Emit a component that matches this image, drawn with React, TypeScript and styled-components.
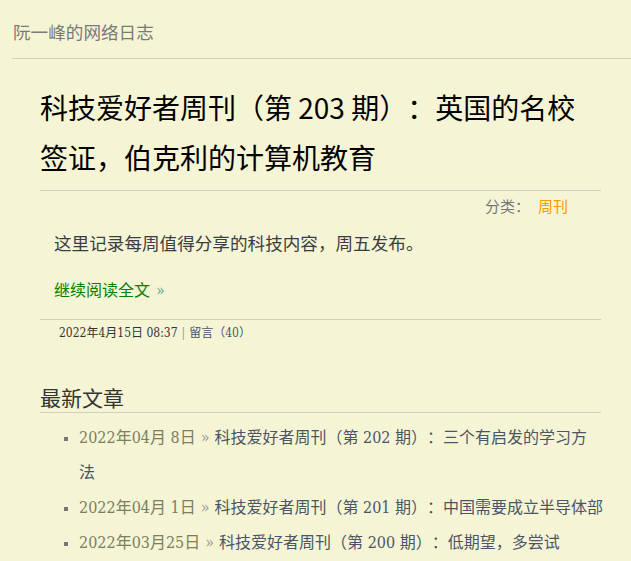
import React from "react";
import styled, { createGlobalStyle } from "styled-components";

const GlobalStyle = createGlobalStyle`
  html, body {
    margin: 0;
    padding: 0;
    background: #f5f5d5;
  }
  body {
    font-family: "DejaVu Serif Condensed", "Liberation Serif", "Noto Sans CJK SC", serif;
    color: #333;
    text-spacing-trim: space-all;
  }
  a { text-decoration: none; }
`;

const Page = styled.div`
  width: 631px;
  min-height: 561px;
  background: #f5f5d5;
`;

const Header = styled.header`
  margin-left: 12px;
  padding: 20px 0 12px 1px;
  border-bottom: 1px solid #cfcfc4;
`;

const SiteName = styled.a`
  display: block;
  font-size: 17.6px;
  line-height: 26px;
  color: #7a7a7a;
  font-family: "Liberation Serif", "Noto Sans CJK SC", serif;
`;

const Article = styled.article`
  margin: 0 30px 0 40px;
`;

const Title = styled.h1`
  margin: 23px 0 0;
  padding-bottom: 8px;
  font-family: "Noto Sans CJK SC", sans-serif;
  font-weight: 400;
  font-size: 28px;
  line-height: 50px;
  color: #000;
  border-bottom: 1px solid #cfcfc4;
`;

const Category = styled.div`
  margin-top: 5px;
  padding-right: 33px;
  text-align: right;
  font-family: "Noto Sans CJK SC", sans-serif;
  font-size: 15px;
  line-height: 20px;
  color: #777;
`;

const CategoryLink = styled.a`
  margin-left: 8px;
  color: #f90;
`;

const Summary = styled.p`
  margin: 14px 0 0;
  padding-left: 14px;
  font-size: 17.6px;
  line-height: 28px;
  color: #3a3d44;
`;

const ReadMore = styled.a`
  display: block;
  margin-top: 19px;
  padding-left: 14px;
  font-size: 16px;
  line-height: 28px;
  color: #008000;
`;

const Quote = styled.span<{ $color?: string }>`
  margin-left: 6px;
  color: ${(p) => p.$color ?? "#6a8"};
`;

const Meta = styled.div`
  margin-top: 14px;
  border-top: 1px solid #cfcfc4;
  padding: 4px 0 0 19px;
  font-size: 12px;
  line-height: 18px;
  color: #333;
`;

const Sep = styled.span`
  margin: 0 4px;
  color: #9a9a9a;
`;

const Comments = styled.a`
  color: #4b5566;
`;

const Section = styled.section`
  margin: 45px 0 0;
`;

const SectionTitle = styled.h2`
  margin: 0;
  font-weight: 400;
  font-size: 21px;
  line-height: 25px;
  color: #333;
  border-bottom: 1px solid #cfcfc4;
`;

const List = styled.ul`
  margin: 7px -10px 0 0;
  padding: 0 0 0 39px;
  list-style: square outside;
`;

const Item = styled.li`
  font-size: 16px;
  line-height: 35px;
  color: #4b5566;
  white-space: nowrap;
  &::marker {
    color: #777;
    font-size: 13px;
  }
`;

const ItemDate = styled.span`
  color: #7d7d5f;
`;

const ItemArrow = styled.span`
  margin: 0 5px;
  color: #999;
`;

const ItemLink = styled.a`
  color: #4b5566;
`;

const posts = [
  { date: "2022年04月 8日", title: ["科技爱好者周刊（第 202 期）：三个有启发的学习方", "法"] },
  { date: "2022年04月 1日", title: ["科技爱好者周刊（第 201 期）：中国需要成立半导体部"] },
  { date: "2022年03月25日", title: ["科技爱好者周刊（第 200 期）：低期望，多尝试"] },
];

export default function App() {
  return (
    <Page>
      <GlobalStyle />
      <Header>
        <SiteName>阮一峰的网络日志</SiteName>
      </Header>
      <Article>
        <Title>科技爱好者周刊（第 203 期）：英国的名校签证，伯克利的计算机教育</Title>
        <Category>
          分类：<CategoryLink>周刊</CategoryLink>
        </Category>
        <Summary>这里记录每周值得分享的科技内容，周五发布。</Summary>
        <ReadMore>
          继续阅读全文<Quote $color="#5a9">»</Quote>
        </ReadMore>
        <Meta>
          2022年4月15日 08:37<Sep>|</Sep>
          <Comments>留言（40）</Comments>
        </Meta>
        <Section>
          <SectionTitle>最新文章</SectionTitle>
          <List>
            {posts.map((p) => (
              <Item key={p.date}>
                <ItemDate>{p.date}</ItemDate>
                <ItemArrow>»</ItemArrow>
                <ItemLink>
                  {p.title.map((t, i) => (
                    <React.Fragment key={i}>
                      {i > 0 && <br />}
                      {t}
                    </React.Fragment>
                  ))}
                </ItemLink>
              </Item>
            ))}
          </List>
        </Section>
      </Article>
    </Page>
  );
}
